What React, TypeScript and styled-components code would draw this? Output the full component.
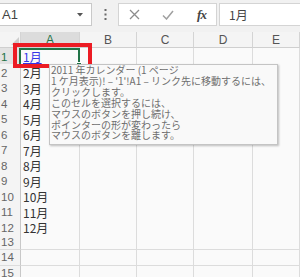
import React from "react";
import styled, { createGlobalStyle } from "styled-components";

const Global = createGlobalStyle`
  html, body { margin: 0; padding: 0; background: #f9f9f9; }
  body { font-family: "Noto Sans CJK JP", "Noto Sans", sans-serif; overflow: hidden; }
  * { box-sizing: border-box; }
`;

const Screen = styled.div`
  position: relative;
  width: 300px;
  height: 277px;
  overflow: hidden;
  background: #f9f9f9;
`;

const FormulaBar = styled.div`
  display: flex;
  align-items: flex-start;
  height: 32px;
  padding-top: 3px;
  background: #f1f1f1;
`;

const NameBox = styled.div`
  width: 92px;
  height: 23px;
  background: #fff;
  border: 1px solid #c9c9c9;
  border-left: none;
  display: flex;
  align-items: center;
  justify-content: space-between;
  padding: 0 8px 0 2px;
  font-family: "Liberation Sans", Arial, sans-serif;
  font-size: 13px;
  color: #444;
`;

const Dots = styled.div`
  width: 26px;
  height: 23px;
  display: flex;
  align-items: center;
  justify-content: center;
`;

const ActionBox = styled.div`
  width: 99px;
  height: 23px;
  background: #fff;
  border: 1px solid #d4d4d4;
  display: flex;
  align-items: center;
`;

const ActionSlot = styled.div<{ $w: number }>`
  width: ${(p) => p.$w}px;
  height: 100%;
  display: flex;
  align-items: center;
  justify-content: center;
`;

const Fx = styled.span`
  font-family: "Liberation Serif", "Times New Roman", serif;
  font-style: italic;
  font-weight: bold;
  font-size: 13px;
  color: #444;
  letter-spacing: -1px;
`;

const FormulaInput = styled.div`
  flex: 1;
  margin-left: 2px;
  height: 23px;
  background: #fff;
  border: 1px solid #d4d4d4;
  border-right: none;
  display: flex;
  align-items: center;
  padding-left: 9px;
  font-size: 12px;
  color: #444;
`;

const COLS = "21px 59px 57px 57px 59px 1fr";

const Sheet = styled.div`
  display: flex;
  flex-direction: column;
`;

const Row = styled.div<{ $h: number }>`
  display: grid;
  grid-template-columns: ${COLS};
  height: ${(p) => p.$h}px;
`;

const ColHead = styled.div<{ $sel?: boolean }>`
  border-right: 1px solid #d4d4d4;
  border-bottom: 1px solid #cfcfcf;
  background: ${(p) => (p.$sel ? "#dcdcdc" : "#f4f4f4")};
  color: ${(p) => (p.$sel ? "#217346" : "#555")};
  font-family: "Liberation Sans", Arial, sans-serif;
  font-size: 12px;
  display: flex;
  align-items: center;
  justify-content: center;
`;

const Corner = styled.div`
  border-right: 1px solid #d4d4d4;
  border-bottom: 1px solid #cfcfcf;
  background: #f4f4f4;
  display: flex;
  align-items: flex-end;
  justify-content: flex-end;
  padding: 0 1px 2px 0;
`;

const RowHead = styled.div<{ $sel?: boolean }>`
  border-right: 1px solid #c8c8c8;
  border-bottom: 1px solid #dcdcdc;
  background: ${(p) => (p.$sel ? "#e2e2e2" : "#f4f4f4")};
  color: ${(p) => (p.$sel ? "#217346" : "#666")};
  font-family: "Liberation Sans", Arial, sans-serif;
  font-size: 11.5px;
  display: flex;
  align-items: center;
  padding-left: 1px;
`;

const Cell = styled.div`
  border-right: 1px solid #dcdcdc;
  border-bottom: 1px solid #dcdcdc;
  background: #fafafa;
  font-size: 12px;
  color: #333;
  display: flex;
  align-items: center;
  padding-left: 2px;
  white-space: nowrap;
  position: relative;
`;

const Link = styled.span`
  color: #3535e8;
  text-decoration: underline;
  text-underline-offset: 1px;
`;

const Selection = styled.div`
  position: absolute;
  z-index: 2;
  left: -2px;
  top: 0px;
  right: -1px;
  bottom: -1px;
  border: 2px solid #217346;
  pointer-events: none;
`;

const Handle = styled.div`
  position: absolute;
  right: -4px;
  bottom: -4px;
  width: 6px;
  height: 6px;
  background: #217346;
  border: 1px solid #fff;
`;

const RedFrame = styled.div`
  position: absolute;
  z-index: 3;
  left: 13px;
  top: 43px;
  width: 79px;
  height: 25px;
  border: 4px solid #ec1c24;
`;

const Comment = styled.div`
  position: absolute;
  z-index: 4;
  left: 49px;
  top: 64px;
  width: 229px;
  height: 81px;
  background: #f9f9f9;
  border: 1px solid #c4c4c4;
  box-shadow: 1px 1px 2px rgba(0, 0, 0, 0.25);
  padding: 0 0 0 1px;
  font-size: 10px;
  line-height: 10.9px;
  color: #6e6e6e;
  white-space: nowrap;
`;

const CommentLine = styled.div``;

const months = ["2月", "3月", "4月", "5月", "6月", "7月", "8月", "9月", "10月", "11月", "12月", "", "", ""];

const commentLines = [
  "2011 年カレンダー (1 ページ",
  "1 ケ月表示)! – '1'!A1 – リンク先に移動するには、",
  "クリックします。",
  "このセルを選択するには、",
  "マウスのボタンを押し続け、",
  "ポインターの形が変わったら",
  "マウスのボタンを離します。",
];

export default function App() {
  return (
    <>
      <Global />
      <Screen>
        <FormulaBar>
          <NameBox>
            <span>A1</span>
            <svg width="6" height="4" viewBox="0 0 6 4">
              <path d="M0 0 H6 L3 3.5 Z" fill="#555" />
            </svg>
          </NameBox>
          <Dots>
            <svg width="3" height="11" viewBox="0 0 3 11">
              <rect x="0.5" y="0" width="2" height="2" fill="#6a6a6a" />
              <rect x="0.5" y="4.5" width="2" height="2" fill="#6a6a6a" />
              <rect x="0.5" y="9" width="2" height="2" fill="#6a6a6a" />
            </svg>
          </Dots>
          <ActionBox>
            <ActionSlot $w={30}>
              <svg width="11" height="11" viewBox="0 0 11 11">
                <path d="M1 1 L10 10 M10 1 L1 10" stroke="#8c8c8c" strokeWidth="1.3" />
              </svg>
            </ActionSlot>
            <ActionSlot $w={38}>
              <svg width="12" height="10" viewBox="0 0 12 10">
                <path d="M1 5.5 L4.5 9 L11 1" stroke="#a0a0a0" strokeWidth="1.5" fill="none" />
              </svg>
            </ActionSlot>
            <ActionSlot $w={29}>
              <Fx>fx</Fx>
            </ActionSlot>
          </ActionBox>
          <FormulaInput>1月</FormulaInput>
        </FormulaBar>
        <Sheet>
          <Row $h={16}>
            <Corner>
              <svg width="8" height="8" viewBox="0 0 8 8">
                <path d="M8 0 V8 H0 Z" fill="#cdcdcd" />
              </svg>
            </Corner>
            <ColHead $sel>A</ColHead>
            <ColHead>B</ColHead>
            <ColHead>C</ColHead>
            <ColHead>D</ColHead>
            <ColHead>E</ColHead>
          </Row>
          <Row $h={16}>
            <RowHead $sel>1</RowHead>
            <Cell>
              <Link>1月</Link>
              <Selection>
                <Handle />
              </Selection>
            </Cell>
            <Cell />
            <Cell />
            <Cell />
            <Cell />
          </Row>
          {months.map((m, i) => (
            <Row key={i} $h={15.5}>
              <RowHead>{i + 2}</RowHead>
              <Cell>{m}</Cell>
              <Cell />
              <Cell />
              <Cell />
              <Cell />
            </Row>
          ))}
        </Sheet>
        <RedFrame />
        <Comment>
          {commentLines.map((l, i) => (
            <CommentLine key={i}>{l}</CommentLine>
          ))}
        </Comment>
      </Screen>
    </>
  );
}
